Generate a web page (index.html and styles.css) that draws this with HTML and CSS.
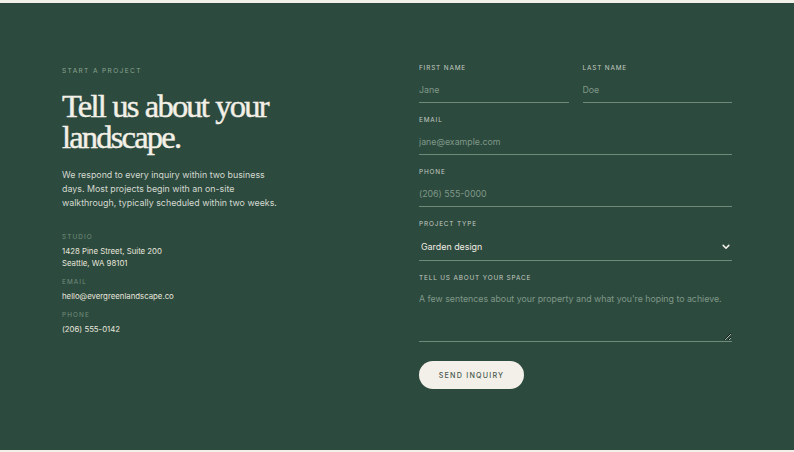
FILE: index.html
```html
<!DOCTYPE html>
<html lang="en">
<head>
<meta charset="utf-8">
<title>Start a project</title>
<link rel="stylesheet" href="styles.css">
</head>
<body>
<section class="contact">
  <div class="wrap">
    <div class="intro">
      <p class="eyebrow">Start a project</p>
      <h1 class="title">Tell us about your landscape.</h1>
      <p class="lead">We respond to every inquiry within two business days. Most projects begin with an on-site walkthrough, typically scheduled within two weeks.</p>
      <dl class="details">
        <div class="detail">
          <dt>Studio</dt>
          <dd>1428 Pine Street, Suite 200<br>Seattle, WA 98101</dd>
        </div>
        <div class="detail">
          <dt>Email</dt>
          <dd>hello@evergreenlandscape.co</dd>
        </div>
        <div class="detail">
          <dt>Phone</dt>
          <dd>(206) 555-0142</dd>
        </div>
      </dl>
    </div>
    <form class="form">
      <div class="row">
        <label class="field">
          <span class="label">First name</span>
          <input class="input" type="text" placeholder="Jane">
        </label>
        <label class="field">
          <span class="label">Last name</span>
          <input class="input" type="text" placeholder="Doe">
        </label>
      </div>
      <label class="field">
        <span class="label">Email</span>
        <input class="input" type="email" placeholder="jane@example.com">
      </label>
      <label class="field">
        <span class="label">Phone</span>
        <input class="input" type="tel" placeholder="(206) 555-0000">
      </label>
      <label class="field">
        <span class="label">Project type</span>
        <span class="select-wrap">
          <select class="select">
            <option>Garden design</option>
            <option>Hardscaping</option>
            <option>Maintenance</option>
          </select>
          <svg class="chevron" width="8" height="6" viewBox="0 0 8 6" aria-hidden="true"><path d="M1.2 1.4 L4 4.2 L6.8 1.4" fill="none" stroke="#f1eee6" stroke-width="1.6" stroke-linecap="round" stroke-linejoin="round"/></svg>
        </span>
      </label>
      <label class="field">
        <span class="label">Tell us about your space</span>
        <textarea class="textarea" placeholder="A few sentences about your property and what you're hoping to achieve."></textarea>
      </label>
      <div class="actions">
        <button class="button" type="button">Send inquiry</button>
      </div>
    </form>
  </div>
</section>
</body>
</html>
```
FILE: styles.css
```css
* { box-sizing: border-box; }

html, body {
  margin: 0;
  padding: 0;
}

body {
  background: #f3f0e9;
  padding-top: 3px;
  font-family: "Inter", "Noto Sans", sans-serif;
}

.contact {
  background: #2d4a3e;
  height: 447px;
  padding-top: 60px;
}

.wrap {
  width: 670px;
  margin: 0 auto;
  display: grid;
  grid-template-columns: 1fr 1fr;
  column-gap: 44px;
  align-items: start;
}

/* Left column */
.eyebrow {
  margin: 0;
  font-size: 6.6px;
  line-height: 16px;
  letter-spacing: 1.35px;
  text-transform: uppercase;
  color: #8ba492;
}

.title {
  margin: 12px 0 0;
  font-family: "Liberation Serif", "DejaVu Serif", serif;
  font-weight: 400;
  font-size: 32.5px;
  line-height: 31px;
  letter-spacing: -1.8px;
  word-spacing: 1px;
  -webkit-text-stroke: 0.45px #f3f0e7;
  color: #f3f0e7;
  width: 240px;
}

.lead {
  margin: 15px 0 0;
  font-size: 8.85px;
  line-height: 14px;
  color: #d3d9d0;
  width: 226px;
}

.details {
  margin: 22px 0 0;
  display: flex;
  flex-direction: column;
  gap: 8px;
}

.detail dt {
  font-size: 6.4px;
  line-height: 10px;
  letter-spacing: 1.1px;
  text-transform: uppercase;
  color: #728f7d;
}

.detail dd {
  margin: 3px 0 0;
  font-size: 7.8px;
  line-height: 12px;
  color: #e6e6dd;
}

/* Form */
.form {
  display: flex;
  flex-direction: column;
  gap: 12px;
}

.row {
  display: grid;
  grid-template-columns: 1fr 1fr;
  column-gap: 14px;
}

.field {
  display: flex;
  flex-direction: column;
}

.label {
  font-size: 6.4px;
  line-height: 10px;
  letter-spacing: 0.85px;
  text-transform: uppercase;
  color: #c3cbc2;
  margin-bottom: 4px;
}

.input,
.select,
.textarea {
  font-family: "Inter", "Noto Sans", sans-serif;
  background: transparent;
  border: 0;
  border-bottom: 1px solid #6f8a79;
  border-radius: 0;
  outline: none;
  color: #eeebe3;
  padding: 0;
  margin: 0;
  width: 100%;
}

.input {
  height: 26px;
  font-size: 8.8px;
}

.input::placeholder,
.textarea::placeholder {
  color: #7f9888;
  opacity: 1;
}

.select-wrap {
  display: grid;
  align-items: center;
}

.select-wrap > * {
  grid-area: 1 / 1;
}

.select {
  -webkit-appearance: none;
  appearance: none;
  height: 28px;
  font-size: 8.9px;
  padding-left: 2px;
  color: #f0ede5;
}

.select option {
  color: #1f2f28;
}

.chevron {
  justify-self: end;
  margin-right: 2px;
  pointer-events: none;
}

.textarea {
  height: 55px;
  font-size: 8.8px;
  line-height: 14px;
  padding-top: 5px;
  resize: vertical;
}

.actions {
  padding-top: 7px;
}

.button {
  font-family: "Inter", "Noto Sans", sans-serif;
  background: #f3f0e9;
  color: #4a5a51;
  border: 0;
  border-radius: 999px;
  height: 28px;
  width: 105px;
  padding: 0;
  font-size: 7.2px;
  font-weight: 500;
  letter-spacing: 1.2px;
  text-transform: uppercase;
  cursor: pointer;
}
```
